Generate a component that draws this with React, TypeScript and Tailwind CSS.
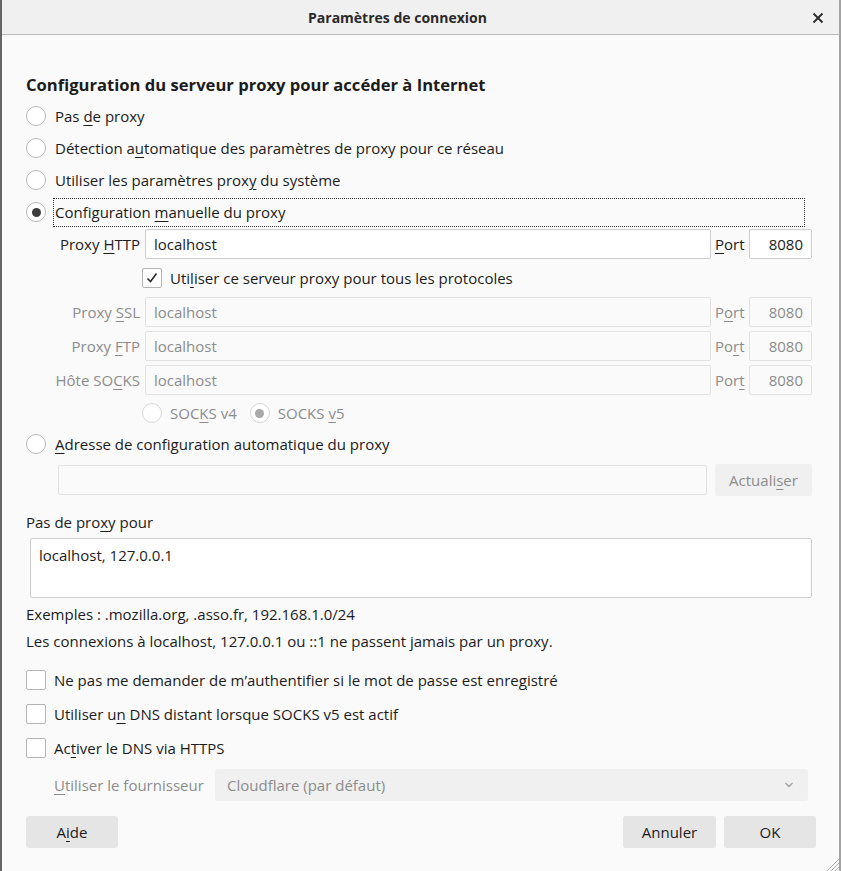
import type { ReactNode } from 'react';

const font = { fontFamily: '"Open Sans", "Noto Sans", sans-serif' };

const Key = ({ children }: { children: ReactNode }) => (
  <u className="underline decoration-1 underline-offset-[3px]">{children}</u>
);

const Radio = ({ checked, disabled }: { checked?: boolean; disabled?: boolean }) => (
  <span
    className={
      'flex h-[20px] w-[20px] shrink-0 items-center justify-center rounded-full border bg-white ' +
      (disabled ? 'border-[#d6d6d6]' : 'border-[#b5b5b5]')
    }
  >
    {checked && (
      <span
        className={
          'h-[9px] w-[9px] rounded-full ' + (disabled ? 'bg-[#a8a8a8]' : 'bg-[#3c3c3c]')
        }
      />
    )}
  </span>
);

const Checkbox = ({ checked }: { checked?: boolean }) => (
  <span className="flex h-[20px] w-[20px] shrink-0 items-center justify-center rounded-[2px] border border-[#b5b5b5] bg-white">
    {checked && (
      <svg width="14" height="14" viewBox="0 0 14 14">
        <polyline
          points="2.5,7.5 5.5,10.5 11.5,2.5"
          fill="none"
          stroke="#2b2b2b"
          strokeWidth="1.6"
        />
      </svg>
    )}
  </span>
);

const ProxyRow = ({
  label,
  value,
  port,
  portLabel,
  disabled,
}: {
  label: ReactNode;
  value: string;
  port: string;
  portLabel: ReactNode;
  disabled?: boolean;
}) => (
  <div className={'flex h-[30px] items-center ' + (disabled ? 'text-[#8c8c8c]' : '')}>
    <div className="w-[115px] shrink-0 pr-[1px] text-right">{label}</div>
    <div
      className={
        'ml-[4px] flex h-[30px] flex-1 items-center rounded-[2px] border px-[8px] ' +
        (disabled ? 'border-[#e2e2e2] bg-[#fafafa]' : 'border-[#cdcdcd] bg-white')
      }
    >
      {value}
    </div>
    <div className="ml-[4px] w-[30px] shrink-0">{portLabel}</div>
    <div
      className={
        'ml-[4px] flex h-[30px] w-[63px] shrink-0 items-center justify-end rounded-[2px] border px-[8px] ' +
        (disabled ? 'border-[#e2e2e2] bg-[#fafafa]' : 'border-[#cdcdcd] bg-white')
      }
    >
      {port}
    </div>
  </div>
);

export default function App() {
  return (
    <div
      className="flex h-[871px] w-[841px] flex-col overflow-hidden border-l-2 border-r-2 border-l-[#666666] border-r-[#a3a3a3] bg-[#fafafa] text-[15px] text-[#1c1c1c]"
      style={font}
    >
      {/* Title bar */}
      <div className="relative flex h-[35px] shrink-0 items-center justify-center border-b border-[#b9b9b9] bg-[#f0f0f0]">
        <span className="ml-[-46px] text-[14px] font-bold text-[#2a2a2a]">Paramètres de connexion</span>
        <svg className="absolute right-[15px] top-[12px]" width="12" height="12" viewBox="0 0 12 12">
          <path d="M1.5 1.5 L10.5 10.5 M10.5 1.5 L1.5 10.5" stroke="#2a2a2a" strokeWidth="1.8" />
        </svg>
      </div>

      <div className="flex flex-1 flex-col pl-[24px] pr-[27px]">
        <h1 className="mt-[38px] flex h-[24px] items-center text-[16.6px] font-bold">
          Configuration du serveur proxy pour accéder à Internet
        </h1>

        <div className="mt-[3px] flex h-[32px] items-center gap-[9px]">
          <Radio />
          <span>
            Pas <Key>d</Key>e proxy
          </span>
        </div>
        <div className="flex h-[32px] items-center gap-[9px]">
          <Radio />
          <span>
            Détection a<Key>u</Key>tomatique des paramètres de proxy pour ce réseau
          </span>
        </div>
        <div className="flex h-[32px] items-center gap-[9px]">
          <Radio />
          <span>
            Utiliser les paramètres prox<Key>y</Key> du système
          </span>
        </div>
        <div className="flex h-[32px] items-center gap-[7px]">
          <Radio checked />
          <div className="flex h-[29px] w-[752px] items-center border border-dotted border-[#333333] pl-[1px]">
            <span>
              Configuration <Key>m</Key>anuelle du proxy
            </span>
          </div>
        </div>

        <div className="mt-[1px]">
          <ProxyRow
            label={
              <>
                Proxy <Key>H</Key>TTP
              </>
            }
            value="localhost"
            port="8080"
            portLabel={
              <>
                <Key>P</Key>ort
              </>
            }
          />
        </div>

        <div className="flex h-[38px] items-center gap-[8px] pl-[116px]">
          <Checkbox checked />
          <span>
            Uti<Key>l</Key>iser ce serveur proxy pour tous les protocoles
          </span>
        </div>

        <div className="flex flex-col gap-[4px]">
          <ProxyRow
            disabled
            label={
              <>
                Proxy <Key>S</Key>SL
              </>
            }
            value="localhost"
            port="8080"
            portLabel={
              <>
                P<Key>o</Key>rt
              </>
            }
          />
          <ProxyRow
            disabled
            label={
              <>
                Proxy <Key>F</Key>TP
              </>
            }
            value="localhost"
            port="8080"
            portLabel={
              <>
                Po<Key>r</Key>t
              </>
            }
          />
          <ProxyRow
            disabled
            label={
              <>
                Hôte SO<Key>C</Key>KS
              </>
            }
            value="localhost"
            port="8080"
            portLabel={
              <>
                Por<Key>t</Key>
              </>
            }
          />
        </div>

        <div className="flex h-[36px] items-center pl-[116px] text-[#8c8c8c]">
          <Radio disabled />
          <span className="ml-[8px]">
            SOC<Key>K</Key>S v4
          </span>
          <span className="ml-[13px]">
            <Radio checked disabled />
          </span>
          <span className="ml-[8px]">
            SOCKS <Key>v</Key>5
          </span>
        </div>

        <div className="flex h-[26px] items-center gap-[9px]">
          <Radio />
          <span>
            <Key>A</Key>dresse de configuration automatique du proxy
          </span>
        </div>

        <div className="mt-[7px] flex h-[32px] items-center pl-[32px]">
          <div className="h-[30px] flex-1 rounded-[2px] border border-[#e2e2e2] bg-[#fafafa]" />
          <div className="ml-[8px] flex h-[32px] w-[97px] items-center justify-center rounded-[3px] bg-[#f0f0f0] text-[#8c8c8c]">
            <span>
              Actuali<Key>s</Key>er
            </span>
          </div>
        </div>

        <div className="mt-[14px] flex h-[24px] items-center">
          <span>
            Pas de pro<Key>x</Key>y pour
          </span>
        </div>
        <div className="ml-[4px] mt-[4px] h-[60px] rounded-[2px] border border-[#cdcdcd] bg-white px-[8px] pt-[5px]">
          localhost, 127.0.0.1
        </div>

        <div className="flex h-[32px] items-center">Exemples : .mozilla.org, .asso.fr, 192.168.1.0/24</div>
        <div className="flex h-[22px] items-center">
          Les connexions à localhost, 127.0.0.1 ou ::1 ne passent jamais par un proxy.
        </div>

        <div className="mt-[11px] flex h-[34px] items-center gap-[8px]">
          <Checkbox />
          <span>
            Ne pas me demander de m’authentifier si le mot de passe est enre<Key>g</Key>istré
          </span>
        </div>
        <div className="flex h-[34px] items-center gap-[8px]">
          <Checkbox />
          <span>
            Utiliser u<Key>n</Key> DNS distant lorsque SOCKS v5 est actif
          </span>
        </div>
        <div className="flex h-[34px] items-center gap-[8px]">
          <Checkbox />
          <span>
            Ac<Key>t</Key>iver le DNS via HTTPS
          </span>
        </div>

        <div className="mt-[4px] flex h-[32px] items-center pl-[28px] text-[#8c8c8c]">
          <span className="w-[161px] shrink-0">
            <Key>U</Key>tiliser le fournisseur
          </span>
          <div className="mr-[4px] flex h-[32px] flex-1 items-center justify-between rounded-[3px] bg-[#f0f0f0] pl-[12px] pr-[14px]">
            <span>Cloudflare (par défaut)</span>
            <svg width="10" height="6" viewBox="0 0 10 6">
              <polyline points="1.5,1 5,4.5 8.5,1" fill="none" stroke="#a0a0a0" strokeWidth="1.4" />
            </svg>
          </div>
        </div>

        <div className="mt-[15px] flex h-[32px] items-center">
          <div className="flex h-[32px] w-[92px] items-center justify-center rounded-[3px] bg-[#e5e5e5]">
            <span>
              A<Key>i</Key>de
            </span>
          </div>
          <div className="ml-auto flex h-[32px] w-[93px] items-center justify-center rounded-[3px] bg-[#e5e5e5]">
            Annuler
          </div>
          <div className="-mr-[4px] ml-[8px] flex h-[32px] w-[92px] items-center justify-center rounded-[3px] bg-[#e5e5e5]">
            OK
          </div>
        </div>

        <div className="relative flex-1">
          <svg className="absolute bottom-0 right-[-27px]" width="14" height="14" viewBox="0 0 14 14">
            <path d="M14 2 L2 14 M14 6 L6 14 M14 10 L10 14" stroke="#b0b0b0" strokeWidth="1" />
          </svg>
        </div>
      </div>
    </div>
  );
}
